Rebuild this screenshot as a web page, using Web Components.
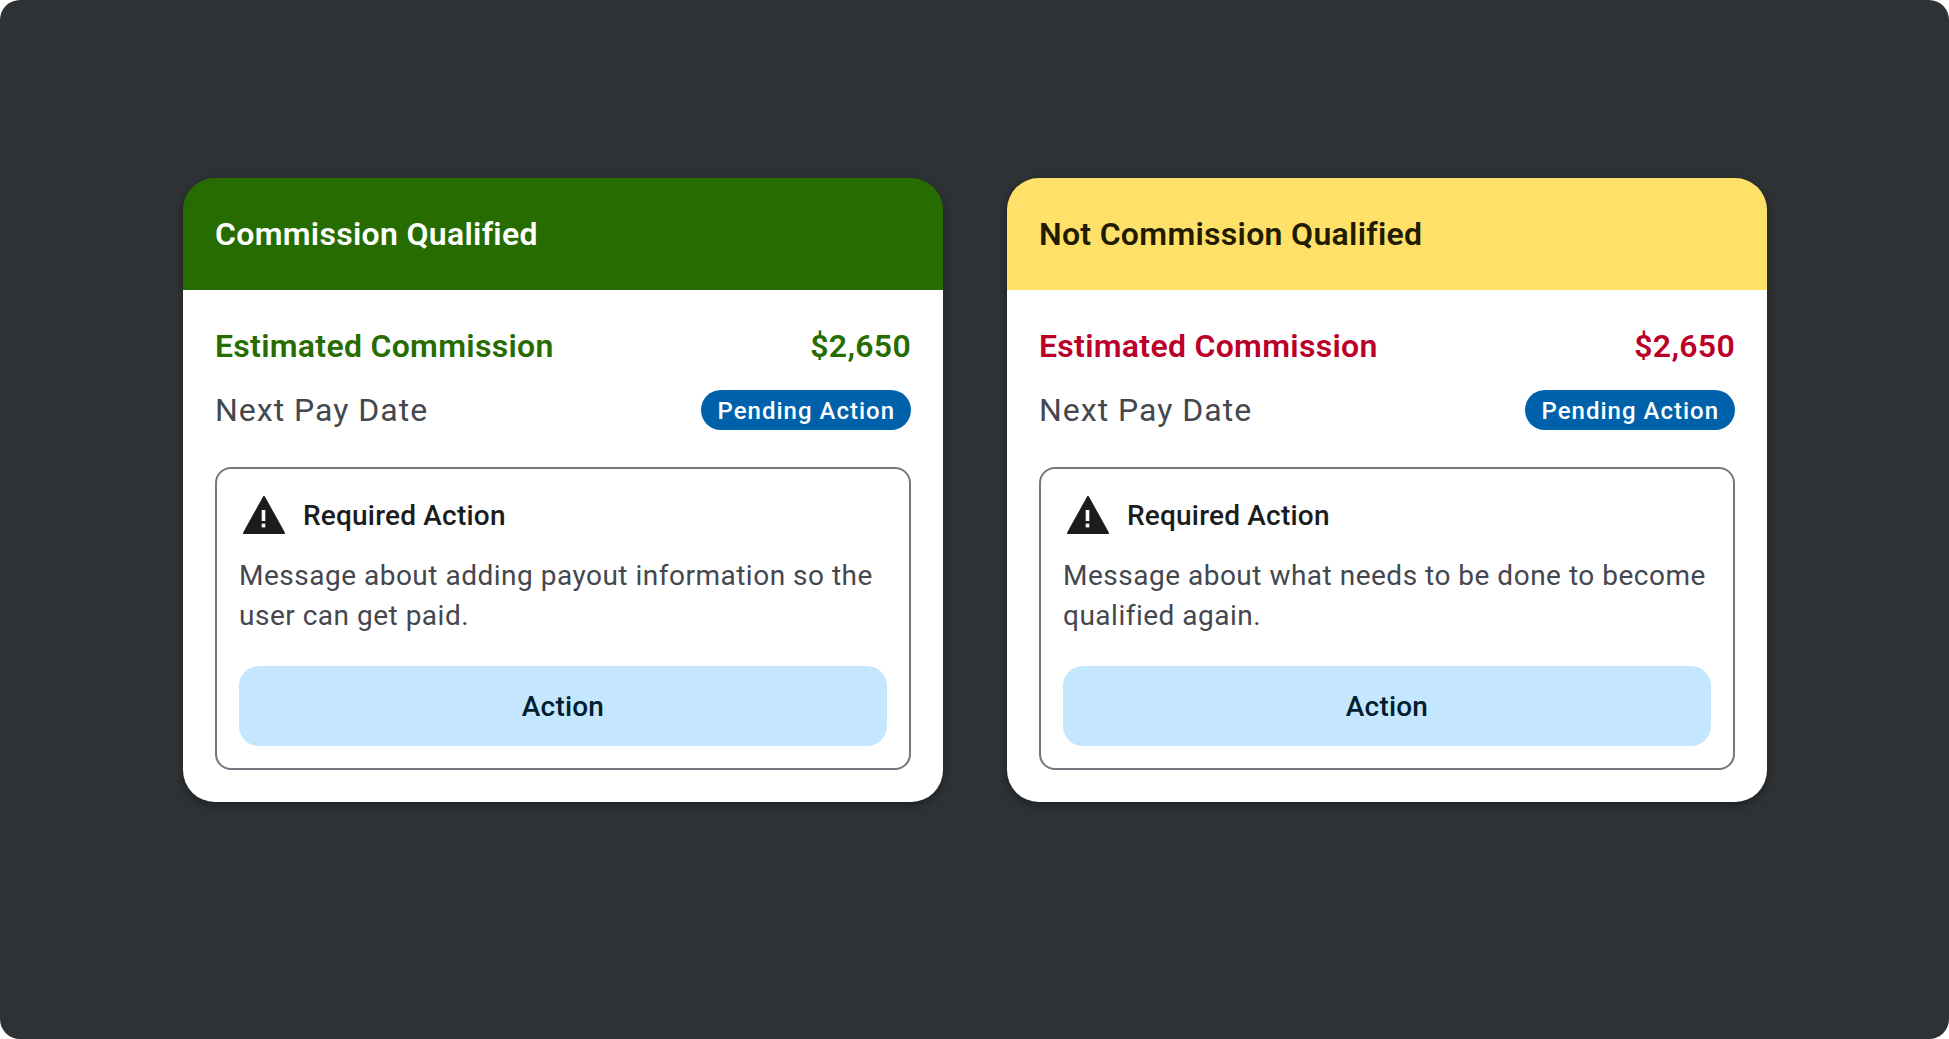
<!DOCTYPE html>
<html lang="en">
<head>
<meta charset="utf-8">
<title>Commission cards</title>
<style>
    html, body { margin: 0; height: 100%; background: #fff; }
    body { font-family: Roboto, "Liberation Sans", sans-serif; }
</style>
</head>
<body>
<commission-stage>
    <commission-card status="qualified" heading="Commission Qualified" amount="$2,650">
        Message about adding payout information so the user can get paid.
    </commission-card>
    <commission-card status="unqualified" heading="Not Commission Qualified" amount="$2,650">
        Message about what needs to be done to become qualified again.
    </commission-card>
</commission-stage>

<script>
class CommissionStage extends HTMLElement {
    constructor() {
        super();
        this.attachShadow({ mode: "open" });
        this.shadowRoot.innerHTML = `
            <style>
                :host {
                    display: flex;
                    justify-content: center;
                    align-items: flex-start;
                    gap: 64px;
                    box-sizing: border-box;
                    height: 1039px;
                    padding: 178px 0 0 1px;
                    background: #2e3235;
                    border-radius: 20px;
                    overflow: hidden;
                }
            </style>
            <slot></slot>
        `;
    }
}
customElements.define('commission-stage', CommissionStage);

class StatusPill extends HTMLElement {
    constructor() {
        super();
        this.attachShadow({ mode: "open" });
        this.shadowRoot.innerHTML = `
            <style>
                :host {
                    display: inline-flex;
                    align-items: center;
                    box-sizing: border-box;
                    height: 40px;
                    padding: 1px 16px 0 17px;
                    border-radius: 20px;
                    background: #0061ab;
                    color: #fff;
                    font-size: 24px;
                    font-weight: 500;
                    letter-spacing: 1px;
                }
            </style>
            <slot></slot>
        `;
    }
}
customElements.define('status-pill', StatusPill);

class ActionPanel extends HTMLElement {
    constructor() {
        super();
        this.attachShadow({ mode: "open" });
        this.shadowRoot.innerHTML = `
            <style>
                :host {
                    display: block;
                    box-sizing: border-box;
                    padding: 22px;
                    border: 2px solid #74777f;
                    border-radius: 16px;
                }
                .title {
                    display: flex;
                    align-items: center;
                    gap: 18px;
                    height: 48px;
                    padding-left: 4px;
                    color: #1a1c1e;
                    font-size: 28px;
                    font-weight: 500;
                    letter-spacing: 0.2px;
                }
                svg { width: 42px; height: 38px; flex: none; }
                .message {
                    margin: 17px 0 30px;
                    color: #44474e;
                    font-size: 28px;
                    line-height: 40px;
                    letter-spacing: 0.5px;
                }
                button {
                    display: block;
                    width: 100%;
                    height: 80px;
                    padding: 1px 0 0;
                    border: 0;
                    border-radius: 20px;
                    background: #c4e7ff;
                    color: #001e30;
                    font: 500 28px Roboto, "Liberation Sans", sans-serif;
                    letter-spacing: 0.2px;
                }
            </style>
            <div class="title">
                <svg viewBox="0 0 42 38" preserveAspectRatio="none" aria-hidden="true">
                    <path d="M21 1 41 37H1Z" fill="#1a1c1e" stroke="#1a1c1e" stroke-width="2" stroke-linejoin="round"/>
                    <rect x="18.7" y="14" width="3.6" height="11" fill="#fff"/>
                    <rect x="18.7" y="27.6" width="3.6" height="3.8" fill="#fff"/>
                </svg>
                Required Action
            </div>
            <div class="message"><slot></slot></div>
            <button type="button">Action</button>
        `;
    }
}
customElements.define('action-panel', ActionPanel);

class CommissionCard extends HTMLElement {
    constructor() {
        super();
        this.attachShadow({ mode: "open" });
        const heading = this.getAttribute("heading") || "";
        const amount = this.getAttribute("amount") || "";
        this.shadowRoot.innerHTML = `
            <style>
                :host {
                    display: block;
                    flex: none;
                    width: 760px;
                    border-radius: 32px;
                    box-shadow: 0 3px 8px rgba(0, 0, 0, 0.35);
                    --head-bg: #266c00;
                    --head-fg: #fff;
                    --accent: #266c00;
                }
                :host([status="unqualified"]) {
                    --head-bg: #ffe169;
                    --head-fg: #221b00;
                    --accent: #ba0028;
                }
                header {
                    display: flex;
                    align-items: center;
                    height: 112px;
                    padding: 0 32px 1px;
                    box-sizing: border-box;
                    border-radius: 32px 32px 0 0;
                    background: var(--head-bg);
                    color: var(--head-fg);
                    font-size: 32px;
                    font-weight: 600;
                    letter-spacing: 0.3px;
                }
                .body {
                    padding: 32px;
                    border-radius: 0 0 32px 32px;
                    background: #fff;
                }
                .row {
                    display: flex;
                    justify-content: space-between;
                    align-items: center;
                }
                .estimate {
                    height: 47px;
                    color: var(--accent);
                    font-size: 32px;
                    font-weight: 600;
                    letter-spacing: 0.3px;
                }
                .pay {
                    height: 40px;
                    margin: 21px 0 37px;
                    color: #44474e;
                    font-size: 32px;
                    letter-spacing: 1px;
                }
            </style>
            <header>${heading}</header>
            <div class="body">
                <div class="row estimate"><span>Estimated Commission</span><span>${amount}</span></div>
                <div class="row pay"><span>Next Pay Date</span><status-pill>Pending Action</status-pill></div>
                <action-panel><slot></slot></action-panel>
            </div>
        `;
    }
}
customElements.define('commission-card', CommissionCard);
</script>
</body>
</html>
